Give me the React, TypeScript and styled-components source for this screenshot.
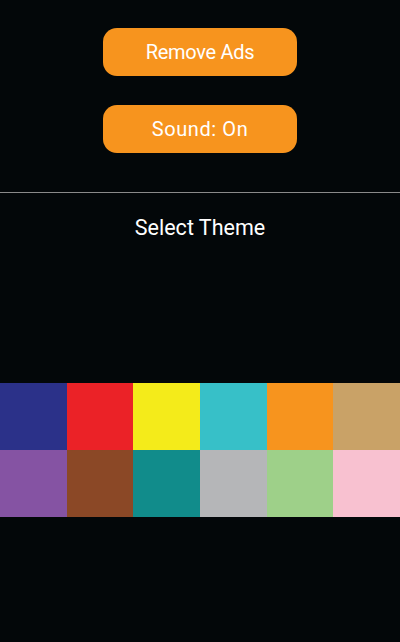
import React from "react";
import styled, { createGlobalStyle } from "styled-components";

const GlobalStyle = createGlobalStyle`
  html, body {
    margin: 0;
    padding: 0;
    background: #030709;
  }
  body {
    font-family: Roboto, "Noto Sans", "Liberation Sans", sans-serif;
  }
`;

const Page = styled.div`
  width: 400px;
  height: 642px;
  background: #030709;
  display: flex;
  flex-direction: column;
  align-items: stretch;
`;

const ButtonStack = styled.div`
  display: flex;
  flex-direction: column;
  align-items: center;
  gap: 29px;
  padding-top: 28px;
`;

const OrangeButton = styled.button<{ $spacing?: number }>`
  width: 194px;
  height: 48px;
  border: none;
  border-radius: 14px;
  background: #f7941e;
  color: #ffffff;
  font-family: Roboto, "Noto Sans", "Liberation Sans", sans-serif;
  font-size: 20px;
  font-weight: 400;
  letter-spacing: ${(p) => p.$spacing ?? 0}px;
  padding: 0;
  cursor: pointer;
`;

const Divider = styled.hr`
  margin: 39px 0 0 0;
  border: none;
  height: 1px;
  background: #8a8a8a;
`;

const Title = styled.div`
  color: #ffffff;
  font-size: 21.5px;
  text-align: center;
  line-height: 26px;
  margin-top: 22px;
`;

const Grid = styled.div`
  display: grid;
  grid-template-columns: repeat(6, 1fr);
  grid-auto-rows: 67px;
  margin-top: 142px;
`;

const Swatch = styled.div<{ $color: string }>`
  background: ${(p) => p.$color};
`;

const colors = [
  "#2b3189",
  "#eb2227",
  "#f4eb1a",
  "#37c0c8",
  "#f7941e",
  "#c9a267",
  "#8553a3",
  "#8b4826",
  "#118c8b",
  "#b5b6b8",
  "#9ed089",
  "#f8c1d0",
];

export default function App() {
  return (
    <>
      <GlobalStyle />
      <Page>
        <ButtonStack>
          <OrangeButton $spacing={-0.3}>Remove Ads</OrangeButton>
          <OrangeButton $spacing={0.6}>Sound: On</OrangeButton>
        </ButtonStack>
        <Divider />
        <Title>Select Theme</Title>
        <Grid>
          {colors.map((c) => (
            <Swatch key={c} $color={c} />
          ))}
        </Grid>
      </Page>
    </>
  );
}
